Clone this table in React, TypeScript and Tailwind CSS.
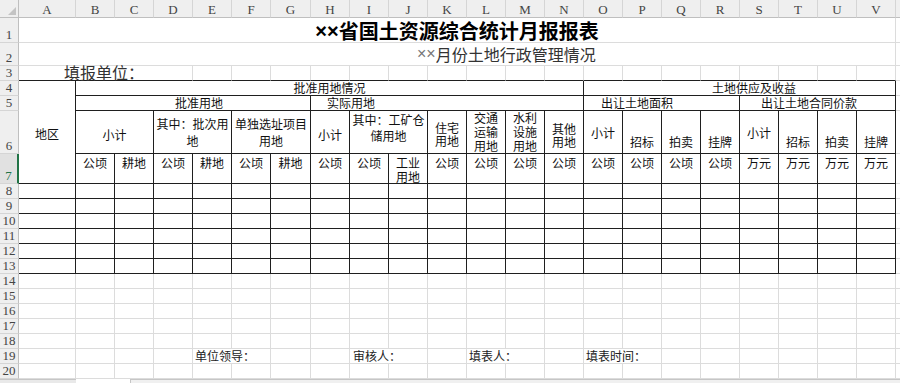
import type { ReactNode } from "react";

// 表格线 / 网格线
const TB = "border-r border-b border-[#1f1f1f]";
const GL = "border-r border-b border-[#dcdcdc]";
const R3 = "border-r border-b border-r-[#dcdcdc] border-b-[#1f1f1f]";
const WL = "border-b border-[#dcdcdc]";
const TX = "flex justify-center text-center text-[12px] whitespace-nowrap text-[#111]";
const ML = "flex flex-col items-center text-center text-[12px] whitespace-nowrap text-[#111]";

const letters = "ABCDEFGHIJKLMNOPQRSTUV".split("");

function RowHead({ n, active }: { n: number; active?: boolean }) {
  return (
    <div
      className={
        active
          ? "flex items-end justify-center border-b border-r-2 border-b-[#d5d5d5] border-r-[#217346] bg-[#e1e1e1] pb-[1px] font-['Liberation_Serif',serif] text-[13px] leading-none text-[#217346]"
          : "flex items-end justify-center border-b border-r border-b-[#d5d5d5] border-r-[#bfbfbf] bg-[#efefef] pb-[1px] font-['Liberation_Serif',serif] text-[13px] leading-none text-[#444]"
      }
    >
      {n}
    </div>
  );
}

function C({ c = "", children }: { c?: string; children?: ReactNode }) {
  return <div className={c}>{children}</div>;
}

// one line of a wrapped header cell
function L({ h, children }: { h: string; children: ReactNode }) {
  return <div className={h}>{children}</div>;
}

function EmptyRow({ n, table }: { n: number; table?: boolean }) {
  return (
    <>
      <RowHead n={n} />
      {letters.map((l) => (
        <C key={l} c={table ? TB : GL} />
      ))}
      <C c={WL} />
    </>
  );
}

const H13 = "h-[13px] leading-[13px]";
const H14 = "h-[14px] leading-[14px]";
const H16 = "h-[16px] leading-[16px]";
const H17 = "h-[17px] leading-[17px]";

export default function App() {
  return (
    <div className="h-[383px] w-[900px] overflow-hidden bg-white font-['Noto_Sans_CJK_SC','Noto_Sans',sans-serif]">
      <div className="grid h-[379px] grid-cols-[19px_57px_repeat(5,39px)_40px_repeat(15,39px)_1fr] grid-rows-[18px_25px_23px_15px_15px_15px_43px_30px_repeat(13,15px)]">
        {/* column headers */}
        <div className="border-b border-r border-b-[#bfbfbf] border-r-[#bfbfbf] bg-[#efefef]">
          <svg width="18" height="17" viewBox="0 0 18 17">
            <polygon points="16,7 16,15 8,15" fill="#c4c4c4" />
          </svg>
        </div>
        {letters.map((l) => (
          <div
            key={l}
            className="flex items-end justify-center border-b border-r border-b-[#bfbfbf] border-r-[#d5d5d5] bg-[#efefef] font-['Liberation_Serif',serif] text-[13px] leading-[14px] text-[#444]"
          >
            {l}
          </div>
        ))}
        <C c="border-b border-[#bfbfbf] bg-[#efefef]" />

        {/* row 1 */}
        <RowHead n={1} />
        <div className="col-span-22 flex items-center justify-center border-b border-r border-[#dcdcdc] pt-[1px] text-[20px] leading-none font-bold text-black">
          <span className="font-['Liberation_Sans',sans-serif]">××</span>省国土资源综合统计月报报表
        </div>
        <C c={WL} />

        {/* row 2 */}
        <RowHead n={2} />
        <div className="col-span-22 flex items-center border-b border-r border-[#dcdcdc] pl-[398px] text-[16px] leading-none text-[#333]">
          <span className="font-['Liberation_Sans',sans-serif] text-[#777]">××</span>月份土地行政管理情况
        </div>
        <C c={WL} />

        {/* row 3 */}
        <RowHead n={3} />
        <div className={`${R3} col-span-4 flex items-end pl-[45px] text-[16px] leading-[16px] whitespace-nowrap text-[#333]`}>
          填报单位：
        </div>
        {letters.slice(4).map((l) => (
          <C key={l} c={R3} />
        ))}
        <C c={WL} />

        {/* row 4 */}
        <RowHead n={4} />
        <div className={`${TB} row-span-4 ${TX} items-center pt-[4px]`}>地区</div>
        <div className={`${TB} col-span-13 ${TX} items-end leading-[14px]`}>批准用地情况</div>
        <div className={`${TB} col-span-8 flex items-end pl-[128px] text-[12px] leading-[14px] whitespace-nowrap text-[#111]`}>
          土地供应及收益
        </div>
        <C c={WL} />

        {/* row 5 */}
        <RowHead n={5} />
        <div className={`${TB} col-span-6 flex items-end pl-[99px] text-[12px] leading-[14px] whitespace-nowrap text-[#111]`}>批准用地</div>
        <div className={`${TB} col-span-7 flex items-end pl-[16px] text-[12px] leading-[14px] whitespace-nowrap text-[#111]`}>实际用地</div>
        <div className={`${TB} col-span-4 flex items-end pl-[17px] text-[12px] leading-[14px] whitespace-nowrap text-[#111]`}>出让土地面积</div>
        <div className={`${TB} col-span-4 flex items-end pl-[21px] text-[12px] leading-[14px] whitespace-nowrap text-[#111]`}>出让土地合同价款</div>
        <C c={WL} />

        {/* row 6 */}
        <RowHead n={6} />
        <div className={`${TB} col-span-2 ${TX} items-center pt-[5px] leading-[14px]`}>小计</div>
        <div className={`${TB} col-span-2 ${ML} justify-center`}>
          <L h={H17}>其中：批次用</L>
          <L h={H17}>地</L>
        </div>
        <div className={`${TB} col-span-2 ${ML} justify-center`}>
          <L h={H17}>单独选址项目</L>
          <L h={H17}>用地</L>
        </div>
        <div className={`${TB} ${TX} items-center pt-[5px] leading-[14px]`}>小计</div>
        <div className={`${TB} col-span-2 ${ML} justify-start pt-[1px]`}>
          <L h={H16}>其中：工矿仓</L>
          <L h={H16}>储用地</L>
        </div>
        <div className={`${TB} ${ML} justify-center pt-[3px]`}>
          <L h={H13}>住宅</L>
          <L h={H13}>用地</L>
        </div>
        <div className={`${TB} ${ML} justify-center`}>
          <L h={H14}>交通</L>
          <L h={H14}>运输</L>
          <L h={H14}>用地</L>
        </div>
        <div className={`${TB} ${ML} justify-center`}>
          <L h={H14}>水利</L>
          <L h={H14}>设施</L>
          <L h={H14}>用地</L>
        </div>
        <div className={`${TB} ${ML} justify-center pt-[6px]`}>
          <L h={H13}>其他</L>
          <L h={H13}>用地</L>
        </div>
        <div className={`${TB} ${TX} items-center pt-[2px] leading-[14px]`}>小计</div>
        <div className={`${TB} ${TX} items-end pb-[4px] leading-[14px]`}>招标</div>
        <div className={`${TB} ${TX} items-end pb-[4px] leading-[14px]`}>拍卖</div>
        <div className={`${TB} ${TX} items-end pb-[4px] leading-[14px]`}>挂牌</div>
        <div className={`${TB} ${TX} items-center pt-[2px] leading-[14px]`}>小计</div>
        <div className={`${TB} ${TX} items-end pb-[4px] leading-[14px]`}>招标</div>
        <div className={`${TB} ${TX} items-end pb-[4px] leading-[14px]`}>拍卖</div>
        <div className={`${TB} ${TX} items-end pb-[4px] leading-[14px]`}>挂牌</div>
        <C c={WL} />

        {/* row 7 */}
        <RowHead n={7} active />
        {["公顷", "耕地", "公顷", "耕地", "公顷", "耕地", "公顷", "公顷"].map((t, i) => (
          <div key={i} className={`${TB} ${TX} items-start pt-[1px] leading-[15px]`}>
            {t}
          </div>
        ))}
        <div className={`${TB} ${ML} justify-start pt-[1px]`}>
          <L h="h-[15px] leading-[15px]">工业</L>
          <L h="h-[13px] leading-[13px]">用地</L>
        </div>
        {["公顷", "公顷", "公顷", "公顷", "公顷", "公顷", "公顷", "公顷", "万元", "万元", "万元", "万元"].map((t, i) => (
          <div key={i} className={`${TB} ${TX} items-start pt-[1px] leading-[15px]`}>
            {t}
          </div>
        ))}
        <C c={WL} />

        {/* rows 8-13 */}
        {[8, 9, 10, 11, 12, 13].map((n) => (
          <EmptyRow key={n} n={n} table />
        ))}

        {/* rows 14-18 */}
        {[14, 15, 16, 17, 18].map((n) => (
          <EmptyRow key={n} n={n} />
        ))}

        {/* row 19 */}
        <RowHead n={19} />
        <C c={GL} />
        <C c={GL} />
        <C c={GL} />
        <C c={GL} />
        <div className={`${GL} col-span-2 flex items-end pl-[2px] text-[12px] leading-[14px] whitespace-nowrap text-[#222]`}>单位领导：</div>
        <C c={GL} />
        <C c={GL} />
        <div className={`${GL} col-span-2 flex items-end pl-[3px] text-[12px] leading-[14px] whitespace-nowrap text-[#222]`}>审核人：</div>
        <C c={GL} />
        <div className={`${GL} col-span-2 flex items-end pl-[2px] text-[12px] leading-[14px] whitespace-nowrap text-[#222]`}>填表人：</div>
        <C c={GL} />
        <div className={`${GL} col-span-2 flex items-end pl-[2px] text-[12px] leading-[14px] whitespace-nowrap text-[#222]`}>填表时间：</div>
        <C c={GL} />
        <C c={GL} />
        <C c={GL} />
        <C c={GL} />
        <C c={GL} />
        <C c={GL} />
        <C c={WL} />

        <EmptyRow n={20} />
      </div>

      {/* sheet tab strip */}
      <div className="flex h-[4px]">
        <div className="w-[76px] border-t border-[#c6c6c6] bg-[#e9e9e9]" />
        <div className="w-[54px] bg-white" />
        <div className="flex-1 border-l border-t border-[#c6c6c6] bg-[#f0f0f0]" />
      </div>
    </div>
  );
}
